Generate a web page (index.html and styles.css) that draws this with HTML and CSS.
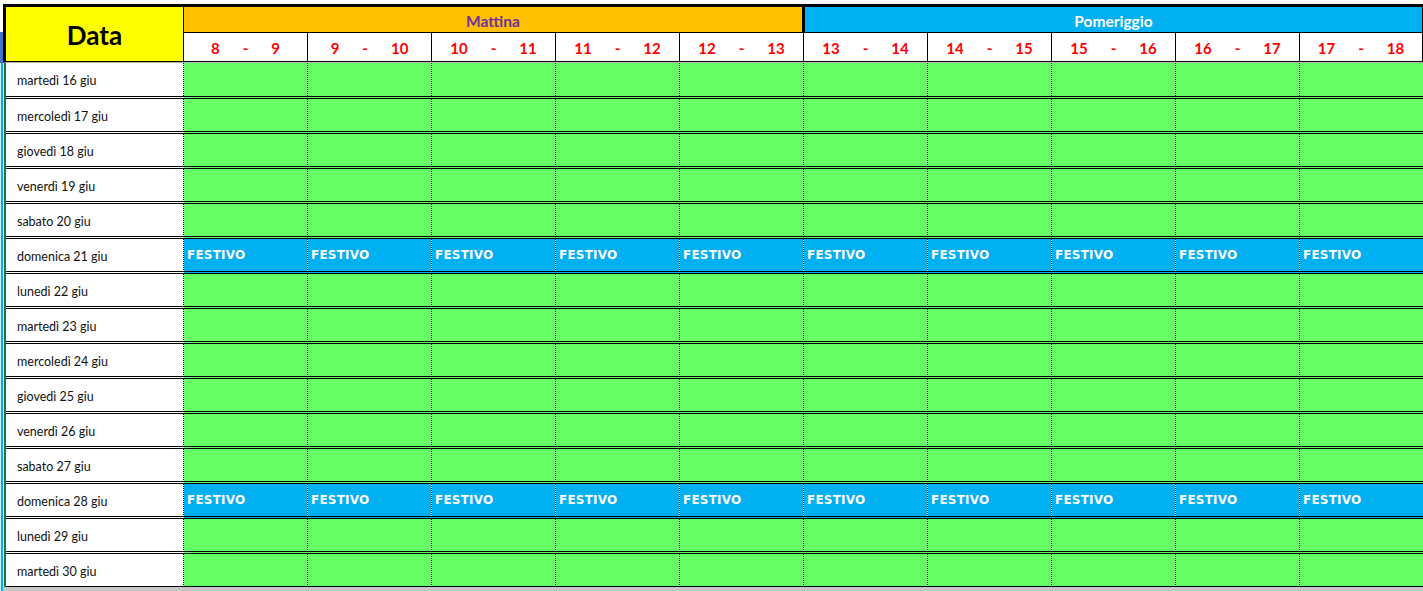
FILE: index.html
```html
<!DOCTYPE html>
<html lang="it">
<head>
<meta charset="utf-8">
<title>Orario</title>
<link rel="stylesheet" href="styles.css">
</head>
<body>
<div class="app">
  <div class="gutter"><div class="g-top"></div><div class="g-head"></div><div class="g-body"></div></div>
  <div class="sheet">
    <div class="head">
      <div class="h-data">Data</div>
      <div class="h-right">
        <div class="h-groups">
          <div class="grp mattina">Mattina</div>
          <div class="grp pomeriggio">Pomeriggio</div>
        </div>
        <div class="h-times">
          <div class="tm"><span>8</span><span>-</span><span>9</span></div>
          <div class="tm"><span>9</span><span>-</span><span>10</span></div>
          <div class="tm"><span>10</span><span>-</span><span>11</span></div>
          <div class="tm"><span>11</span><span>-</span><span>12</span></div>
          <div class="tm"><span>12</span><span>-</span><span>13</span></div>
          <div class="tm"><span>13</span><span>-</span><span>14</span></div>
          <div class="tm"><span>14</span><span>-</span><span>15</span></div>
          <div class="tm"><span>15</span><span>-</span><span>16</span></div>
          <div class="tm"><span>16</span><span>-</span><span>17</span></div>
          <div class="tm last"><span>17</span><span>-</span><span>18</span></div>
        </div>
      </div>
    </div>
    <div class="body">
      <div class="row first"><div class="date">martedì 16 giu</div><div class="slot"></div><div class="slot"></div><div class="slot"></div><div class="slot"></div><div class="slot"></div><div class="slot"></div><div class="slot"></div><div class="slot"></div><div class="slot"></div><div class="slot end"></div></div>
      <div class="row"><div class="date">mercoledì 17 giu</div><div class="slot"></div><div class="slot"></div><div class="slot"></div><div class="slot"></div><div class="slot"></div><div class="slot"></div><div class="slot"></div><div class="slot"></div><div class="slot"></div><div class="slot end"></div></div>
      <div class="row"><div class="date">giovedì 18 giu</div><div class="slot"></div><div class="slot"></div><div class="slot"></div><div class="slot"></div><div class="slot"></div><div class="slot"></div><div class="slot"></div><div class="slot"></div><div class="slot"></div><div class="slot end"></div></div>
      <div class="row"><div class="date">venerdì 19 giu</div><div class="slot"></div><div class="slot"></div><div class="slot"></div><div class="slot"></div><div class="slot"></div><div class="slot"></div><div class="slot"></div><div class="slot"></div><div class="slot"></div><div class="slot end"></div></div>
      <div class="row"><div class="date">sabato 20 giu</div><div class="slot"></div><div class="slot"></div><div class="slot"></div><div class="slot"></div><div class="slot"></div><div class="slot"></div><div class="slot"></div><div class="slot"></div><div class="slot"></div><div class="slot end"></div></div>
      <div class="row"><div class="date">domenica 21 giu</div><div class="slot fest">FESTIVO</div><div class="slot fest">FESTIVO</div><div class="slot fest">FESTIVO</div><div class="slot fest">FESTIVO</div><div class="slot fest">FESTIVO</div><div class="slot fest">FESTIVO</div><div class="slot fest">FESTIVO</div><div class="slot fest">FESTIVO</div><div class="slot fest">FESTIVO</div><div class="slot fest end">FESTIVO</div></div>
      <div class="row"><div class="date">lunedì 22 giu</div><div class="slot"></div><div class="slot"></div><div class="slot"></div><div class="slot"></div><div class="slot"></div><div class="slot"></div><div class="slot"></div><div class="slot"></div><div class="slot"></div><div class="slot end"></div></div>
      <div class="row"><div class="date">martedì 23 giu</div><div class="slot"></div><div class="slot"></div><div class="slot"></div><div class="slot"></div><div class="slot"></div><div class="slot"></div><div class="slot"></div><div class="slot"></div><div class="slot"></div><div class="slot end"></div></div>
      <div class="row"><div class="date">mercoledì 24 giu</div><div class="slot"></div><div class="slot"></div><div class="slot"></div><div class="slot"></div><div class="slot"></div><div class="slot"></div><div class="slot"></div><div class="slot"></div><div class="slot"></div><div class="slot end"></div></div>
      <div class="row"><div class="date">giovedì 25 giu</div><div class="slot"></div><div class="slot"></div><div class="slot"></div><div class="slot"></div><div class="slot"></div><div class="slot"></div><div class="slot"></div><div class="slot"></div><div class="slot"></div><div class="slot end"></div></div>
      <div class="row"><div class="date">venerdì 26 giu</div><div class="slot"></div><div class="slot"></div><div class="slot"></div><div class="slot"></div><div class="slot"></div><div class="slot"></div><div class="slot"></div><div class="slot"></div><div class="slot"></div><div class="slot end"></div></div>
      <div class="row"><div class="date">sabato 27 giu</div><div class="slot"></div><div class="slot"></div><div class="slot"></div><div class="slot"></div><div class="slot"></div><div class="slot"></div><div class="slot"></div><div class="slot"></div><div class="slot"></div><div class="slot end"></div></div>
      <div class="row"><div class="date">domenica 28 giu</div><div class="slot fest">FESTIVO</div><div class="slot fest">FESTIVO</div><div class="slot fest">FESTIVO</div><div class="slot fest">FESTIVO</div><div class="slot fest">FESTIVO</div><div class="slot fest">FESTIVO</div><div class="slot fest">FESTIVO</div><div class="slot fest">FESTIVO</div><div class="slot fest">FESTIVO</div><div class="slot fest end">FESTIVO</div></div>
      <div class="row"><div class="date">lunedì 29 giu</div><div class="slot"></div><div class="slot"></div><div class="slot"></div><div class="slot"></div><div class="slot"></div><div class="slot"></div><div class="slot"></div><div class="slot"></div><div class="slot"></div><div class="slot end"></div></div>
      <div class="row last"><div class="date">martedì 30 giu</div><div class="slot"></div><div class="slot"></div><div class="slot"></div><div class="slot"></div><div class="slot"></div><div class="slot"></div><div class="slot"></div><div class="slot"></div><div class="slot"></div><div class="slot end"></div></div>
    </div>
    <div class="filler"></div>
  </div>
</div>
</body>
</html>
```

FILE: styles.css
```css
* { box-sizing: border-box; }
html, body { margin: 0; padding: 0; background: #fff; }

.app {
  display: flex;
  width: 1423px;
  height: 591px;
  overflow: hidden;
  font-family: Lato, "Open Sans", sans-serif;
}

.gutter { width: 3px; flex: none; display: flex; flex-direction: column; }
.g-top { height: 32px; background: #fff; }
.g-head { height: 31px; background: #4472c4; }
.g-body { flex: 1; background: #00b0f0; border-left: 1px solid #cdeefb; }

.sheet { flex: 1; min-width: 0; display: flex; flex-direction: column; padding-top: 4px; }

.head {
  flex: none;
  display: flex;
  border-top: 3px solid #000;
  border-left: 3px solid #000;
  border-bottom: 1px solid #b4b4b4;
}

.h-data {
  width: 178px;
  height: 55px;
  background: #ffff00;
  border-right: 1px solid #000;
  border-bottom: 1px solid #000;
  display: flex;
  align-items: center;
  justify-content: center;
  font-weight: 700;
  font-size: 26px;
  color: #000;
  padding-top: 1px;
}

.h-right { flex: 1; display: flex; flex-direction: column; }

.h-groups { height: 26px; display: flex; border-bottom: 1px solid #000; }
.grp {
  display: flex;
  align-items: center;
  justify-content: center;
  font-weight: 700;
  font-size: 15.5px;
  padding-top: 3px;
}
.mattina { width: 621px; background: #ffc000; color: #7030a0; border-right: 3px solid #000; }
.pomeriggio { flex: 1; background: #00b0f0; color: #fff; border-right: 1px solid #000; }

.h-times { height: 29px; display: flex; }
.tm {
  width: 124px;
  height: 29px;
  border-right: 1px solid #000;
  border-bottom: 1px solid #000;
  display: flex;
  align-items: center;
  justify-content: center;
  gap: 23px;
  color: #ff0000;
  font-weight: 700;
  font-size: 15px;
  padding-top: 2px;
}
.tm.last { width: 123px; }

.body { flex: none; margin-left: 1px; border-left: 2px solid #217346; }

.row { display: flex; }

.date, .slot {
  height: 35px;
  border-bottom: 3px double #000;
  background-image: repeating-linear-gradient(to bottom, #000 0 1px, #fff 1px 2px);
  background-size: 1px 100%;
  background-position: right top;
  background-repeat: no-repeat;
}
.row.first .date, .row.first .slot { height: 36px; }
.row.last .date, .row.last .slot { height: 33px; border-bottom: 1px solid #000; }

.date {
  width: 178px;
  background-color: #fff;
  display: flex;
  align-items: center;
  padding-left: 11px;
  padding-top: 2px;
  font-size: 12.5px;
  color: #111;
}

.slot { width: 124px; background-color: #66ff66; }
.slot.end { width: 123px; background-image: none; }

.slot.fest {
  background-color: #00b0f0;
  color: #fff;
  font-family: "DejaVu Sans", sans-serif;
  font-weight: 700;
  font-size: 12px;
  letter-spacing: 0.2px;
  display: flex;
  align-items: center;
  padding-left: 3px;
  padding-bottom: 1px;
}

.filler { flex: 1; background: #c6c6c6; }
```
